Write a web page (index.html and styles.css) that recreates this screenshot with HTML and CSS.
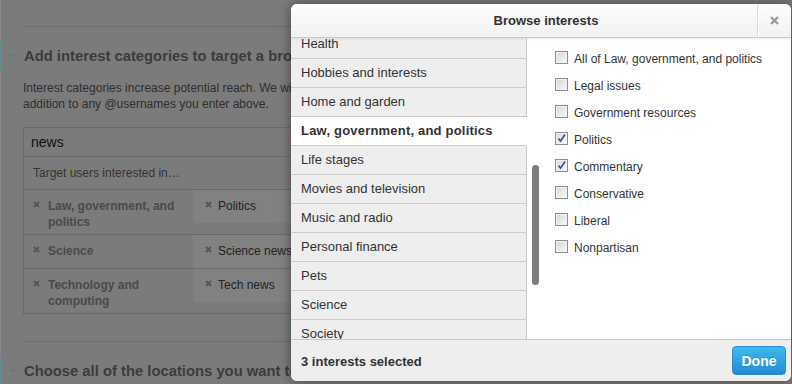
FILE: index.html
```html
<!DOCTYPE html>
<html lang="en">
<head>
  <meta charset="UTF-8">
  <title>Browse interests</title>
  <link rel="stylesheet" href="styles.css">
</head>
<body>
  <div class="page">
    <hr class="rule">
    <div class="section-head"><span class="caret"></span><h3>Add interest categories to target a broader audience</h3></div>
    <p class="help">Interest categories increase potential reach. We will target users interested in these categories in<br>addition to any @usernames you enter above.</p>
    <div class="interest-box">
      <div class="search">news</div>
      <div class="hint">Target users interested in…</div>
      <div class="tag-row">
        <div class="tag-cat"><svg class="x" viewBox="0 0 7 7"><path d="M1 1L6 6M6 1L1 6"/></svg><span>Law, government, and politics</span></div>
        <div class="tag-sub"><svg class="x" viewBox="0 0 7 7"><path d="M1 1L6 6M6 1L1 6"/></svg><span>Politics</span></div>
      </div>
      <div class="tag-row">
        <div class="tag-cat"><svg class="x" viewBox="0 0 7 7"><path d="M1 1L6 6M6 1L1 6"/></svg><span>Science</span></div>
        <div class="tag-sub"><svg class="x" viewBox="0 0 7 7"><path d="M1 1L6 6M6 1L1 6"/></svg><span>Science news</span></div>
      </div>
      <div class="tag-row">
        <div class="tag-cat"><svg class="x" viewBox="0 0 7 7"><path d="M1 1L6 6M6 1L1 6"/></svg><span>Technology and computing</span></div>
        <div class="tag-sub"><svg class="x" viewBox="0 0 7 7"><path d="M1 1L6 6M6 1L1 6"/></svg><span>Tech news</span></div>
      </div>
    </div>
    <hr class="rule rule-low">
    <div class="section-head"><span class="caret"></span><h3>Choose all of the locations you want to target</h3></div>
  </div>

  <div class="modal">
    <div class="modal-head">
      <h2>Browse interests</h2>
      <button class="close"><svg viewBox="0 0 9 9"><path d="M1 1L8 8M8 1L1 8"/></svg></button>
    </div>
    <div class="modal-body">
      <ul class="cat-list">
        <li>Health</li>
        <li>Hobbies and interests</li>
        <li>Home and garden</li>
        <li class="active">Law, government, and politics</li>
        <li>Life stages</li>
        <li>Movies and television</li>
        <li>Music and radio</li>
        <li>Personal finance</li>
        <li>Pets</li>
        <li>Science</li>
        <li>Society</li>
      </ul>
      <span class="thumb"></span>
      <div class="sub-list">
        <label class="check"><span class="box"></span>All of Law, government, and politics</label>
        <label class="check"><span class="box"></span>Legal issues</label>
        <label class="check"><span class="box"></span>Government resources</label>
        <label class="check"><span class="box"><svg viewBox="0 0 11 11"><path d="M2.5 5.5L4.5 8.2L9 1.5"/></svg></span>Politics</label>
        <label class="check"><span class="box"><svg viewBox="0 0 11 11"><path d="M2.5 5.5L4.5 8.2L9 1.5"/></svg></span>Commentary</label>
        <label class="check"><span class="box"></span>Conservative</label>
        <label class="check"><span class="box"></span>Liberal</label>
        <label class="check"><span class="box"></span>Nonpartisan</label>
      </div>
    </div>
    <div class="modal-foot">
      <span class="count">3 interests selected</span>
      <button class="done">Done</button>
    </div>
  </div>
</body>
</html>
```

FILE: styles.css
```css
body {
  margin: 0;
  font-family: 'Liberation Sans', Arial, sans-serif;
  background: #7b7b7b;
  color: #2e2e2e;
  overflow: hidden;
}
.page {
  height: 384px;
  box-sizing: border-box;
  border-left: 1px solid #878787;
  padding-top: 26px;
}
.rule {
  margin: 0 0 0 21px;
  border: 0;
  border-top: 1px solid #6c6c6c;
}
.rule-low {
  margin-top: 27px;
}
.section-head {
  display: flex;
  align-items: center;
  height: 28px;
  margin: 15px 0 0 -1px;
  padding-left: 8px;
  border-left: 2px solid #5c8b97;
}
.caret {
  width: 0;
  height: 0;
  border-left: 3px solid transparent;
  border-right: 3px solid transparent;
  border-top: 4px solid #5d7a88;
  margin-right: 8px;
}
.section-head h3 {
  margin: 0;
  font-size: 14.8px;
  font-weight: bold;
  color: #3c3c3c;
  white-space: nowrap;
}
.help {
  margin: 10px 0 0 22px;
  font-size: 12px;
  line-height: 16px;
  white-space: nowrap;
}
.interest-box {
  width: 600px;
  margin: 15px 0 0 22px;
  border: 1px solid #6a6a6a;
}
.search {
  height: 28px;
  line-height: 28px;
  padding: 0 7px;
  font-size: 14px;
  color: #111;
  border-bottom: 1px solid #6a6a6a;
}
.hint {
  height: 32px;
  line-height: 32px;
  padding: 0 9px;
  font-size: 12px;
  color: #333;
  border-bottom: 1px solid #6a6a6a;
}
.tag-row {
  display: flex;
  align-items: flex-start;
  border-bottom: 1px solid #6a6a6a;
}
.tag-row:last-child {
  border-bottom: 0;
}
.tag-cat {
  display: flex;
  width: 169px;
  box-sizing: border-box;
  padding: 8px 10px 4px 9px;
  font-size: 12px;
  line-height: 16px;
  font-weight: bold;
  color: #4a4a4a;
}
.tag-sub {
  display: flex;
  width: 150px;
  padding: 8px 12px 9px;
  background: #818181;
  font-size: 12px;
  line-height: 16px;
  color: #242424;
}
.x {
  flex: none;
  width: 7px;
  height: 7px;
  margin: 3px 8px 0 0;
  fill: none;
  stroke: #555;
  stroke-width: 1.8;
}
.tag-sub .x {
  margin-right: 6px;
}

/* modal */
.modal {
  position: absolute;
  left: 291px;
  top: 4px;
  width: 500px;
  background: #fff;
  border-radius: 6px;
  overflow: hidden;
  box-shadow: 0 0 12px rgba(0,0,0,0.45);
  color: #333;
}
.modal-head {
  position: relative;
  z-index: 1;
  display: flex;
  height: 33px;
  background: linear-gradient(#fdfdfd, #f1f1f1);
  border-bottom: 1px solid #c9c9c9;
  box-shadow: 0 1px 3px rgba(0,0,0,0.08);
}
.modal-head h2 {
  flex: 1;
  margin: 0;
  padding-left: 44px;
  text-align: center;
  font-size: 13px;
  line-height: 34px;
  font-weight: bold;
  color: #333;
}
.close {
  width: 34px;
  padding: 0;
  border: 0;
  border-left: 1px solid #dcdcdc;
  box-shadow: inset 1px 0 #fff;
  background: transparent;
  display: flex;
  align-items: center;
  justify-content: center;
}
.close svg {
  width: 9px;
  height: 9px;
  fill: none;
  stroke: #9a9a9a;
  stroke-width: 2.3;
}
.modal-body {
  position: relative;
  display: flex;
  height: 301px;
  overflow: hidden;
}
.cat-list {
  flex: none;
  width: 236px;
  margin: -8px 0 0;
  padding: 0;
  list-style: none;
}
.cat-list li {
  height: 28px;
  line-height: 28px;
  padding: 0 10px;
  font-size: 13px;
  background: #eee;
  border-bottom: 1px solid #cbcbcb;
  border-right: 1px solid #cbcbcb;
  white-space: nowrap;
}
.cat-list li.active {
  background: #fff;
  border-right-color: #fff;
  font-weight: bold;
  letter-spacing: 0.2px;
}
.thumb {
  position: absolute;
  left: 241px;
  top: 127px;
  width: 7px;
  height: 120px;
  border-radius: 4px;
  background: #7d7d7d;
}
.sub-list {
  padding: 7px 0 0 28px;
}
.check {
  display: flex;
  align-items: center;
  height: 27px;
  font-size: 12px;
  color: #333;
  white-space: nowrap;
}
.box {
  flex: none;
  width: 11px;
  height: 11px;
  margin: -2px 6px 0 0;
  border: 1px solid #8e8e8e;
  background: linear-gradient(135deg, #d6d6d6, #f9f9f9);
  box-shadow: inset 0 0 0 1px #f2f2f2;
}
.box svg {
  display: block;
  width: 11px;
  height: 11px;
  fill: none;
  stroke: #34489c;
  stroke-width: 1.6;
}
.modal-foot {
  display: flex;
  align-items: center;
  justify-content: space-between;
  height: 41px;
  padding: 0 5px 0 10px;
  background: #eee;
  border-top: 1px solid #c8c8c8;
}
.count {
  font-size: 13px;
  font-weight: bold;
  color: #333;
  margin-top: 2px;
}
.done {
  width: 54px;
  height: 29px;
  padding: 0;
  border: 1px solid #2a8bd2;
  border-radius: 4px;
  background: linear-gradient(#3dbbef, #2589d4);
  color: #fff;
  font-family: 'Liberation Sans', Arial, sans-serif;
  font-size: 14px;
  font-weight: bold;
  text-shadow: 0 -1px 0 rgba(0,0,0,0.15);
}
```
